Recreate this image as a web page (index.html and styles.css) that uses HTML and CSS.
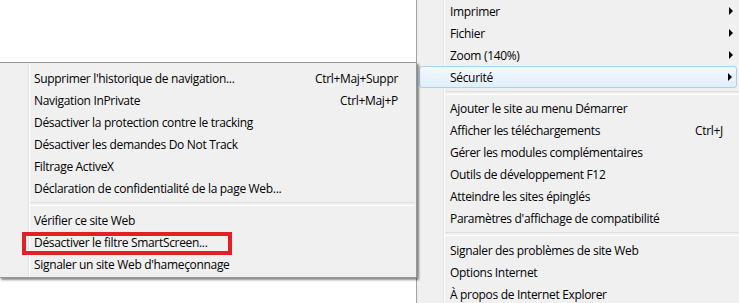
FILE: index.html
```html
<!DOCTYPE html>
<html lang="fr">
<head>
  <meta charset="UTF-8">
  <meta name="viewport" content="width=device-width, initial-scale=1.0">
  <link rel="stylesheet" href="styles.css">
</head>
<body>

  <div class="screen">
    <div class="page"></div>

    <!-- Main tools menu -->
    <ul class="menu main-menu">
      <li class="item">Imprimer<span class="arrow"></span></li>
      <li class="item">Fichier<span class="arrow"></span></li>
      <li class="item">Zoom (140%)<span class="arrow"></span></li>
      <li class="item active">Sécurité<span class="arrow"></span></li>
      <li class="separator"></li>
      <li class="item">Ajouter le site au menu Démarrer</li>
      <li class="item">Afficher les téléchargements<span class="shortcut">Ctrl+J</span></li>
      <li class="item">Gérer les modules complémentaires</li>
      <li class="item">Outils de développement F12</li>
      <li class="item">Atteindre les sites épinglés</li>
      <li class="item">Paramètres d'affichage de compatibilité</li>
      <li class="separator wide"></li>
      <li class="item">Signaler des problèmes de site Web</li>
      <li class="item">Options Internet</li>
      <li class="item">À propos de Internet Explorer</li>
    </ul>

    <!-- Security submenu -->
    <ul class="menu sub-menu">
      <li class="item">Supprimer l'historique de navigation...<span class="shortcut">Ctrl+Maj+Suppr</span></li>
      <li class="item">Navigation InPrivate<span class="shortcut">Ctrl+Maj+P</span></li>
      <li class="item">Désactiver la protection contre le tracking</li>
      <li class="item">Désactiver les demandes Do Not Track</li>
      <li class="item">Filtrage ActiveX</li>
      <li class="item">Déclaration de confidentialité de la page Web...</li>
      <li class="separator"></li>
      <li class="item">Vérifier ce site Web</li>
      <li class="item">Désactiver le filtre SmartScreen...</li>
      <li class="item">Signaler un site Web d'hameçonnage</li>
    </ul>

    <div class="callout"></div>
  </div>

</body>
</html>
```

FILE: styles.css
```css
* {
  margin: 0;
  padding: 0;
  box-sizing: border-box;
}

body {
  font-family: 'Open Sans', 'Noto Sans', sans-serif;
  font-size: 12px;
  color: #000;
  background-color: #fff;
}

.screen {
  position: relative;
  display: flex;
  width: 739px;
  height: 303px;
  overflow: hidden;
}

.page {
  width: 416px;
  flex-shrink: 0;
  background-color: #fff;
}

.menu {
  list-style: none;
  background-color: #f0f0f0;
}

.main-menu {
  flex: 1;
  padding-top: 0;
  border-left: 1px solid #a0a0a0;
  background: linear-gradient(to right, transparent 26px, #e2e3e3 26px, #e2e3e3 27px, #fff 27px, #fff 28px, transparent 28px), #f0f0f0;
}

.sub-menu {
  position: absolute;
  left: -1px;
  top: 62px;
  width: 418px;
  height: 216px;
  padding: 4px 0 0;
  border: 1px solid #979797;
  background: linear-gradient(to right, transparent 28px, #e2e3e3 28px, #e2e3e3 29px, #fff 29px, #fff 30px, transparent 30px), #f0f0f0;
  box-shadow: 2px 2px 2px rgba(0, 0, 0, 0.45);
}

.item {
  position: relative;
  display: flex;
  align-items: center;
  height: 22px;
  white-space: nowrap;
  letter-spacing: -0.32px;
}

.main-menu .item {
  margin: 0 2px;
  padding-left: 31px;
}

.sub-menu .item {
  padding-left: 34px;
  padding-right: 18px;
}

.main-menu .item.active {
  border: 1px solid #a9d0f5;
  border-radius: 3px;
  background: linear-gradient(to bottom, #f2f8fe, #e1eefc);
  padding-left: 30px;
}

.shortcut {
  margin-left: auto;
}

.main-menu .shortcut {
  margin-right: 14px;
}

.arrow {
  position: absolute;
  right: 4px;
  top: 50%;
  margin-top: -4px;
  width: 0;
  height: 0;
  border-top: 4px solid transparent;
  border-bottom: 4px solid transparent;
  border-left: 4px solid #000;
}

.separator {
  height: 9px;
  display: flex;
  flex-direction: column;
  justify-content: center;
}

.separator::before {
  content: "";
  display: block;
  height: 2px;
  border-top: 1px solid #e0e0e0;
  border-bottom: 1px solid #fff;
}

.main-menu .separator {
  margin-left: 28px;
}

.main-menu .separator.wide {
  height: 10px;
}

.sub-menu .separator {
  height: 10px;
  margin-left: 30px;
  margin-right: 1px;
}

.callout {
  position: absolute;
  left: 22px;
  top: 232px;
  width: 210px;
  height: 23px;
  border: 4px solid #e51f26;
}
```
